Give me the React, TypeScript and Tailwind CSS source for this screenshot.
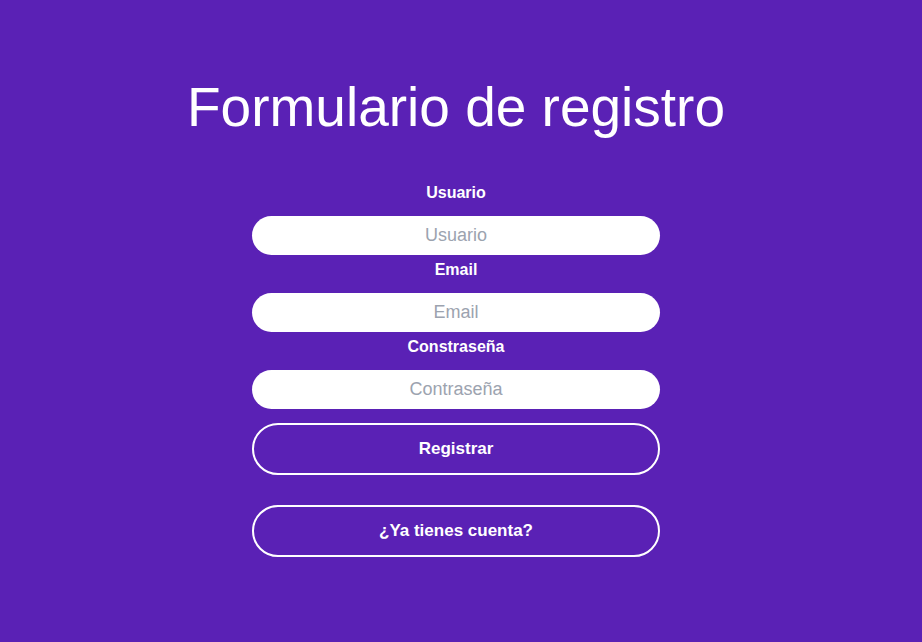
import React from "react";

const font = { fontFamily: '"Liberation Sans", Arial, sans-serif' };

function Field({ label, placeholder, type = "text" }: { label: string; placeholder: string; type?: string }) {
  return (
    <div className="flex flex-col items-center w-full">
      <label className="mt-[5px] mb-[13px] h-[20px] leading-[20px] text-[16px] font-bold text-white">{label}</label>
      <input
        type={type}
        placeholder={placeholder}
        className="w-full h-[39px] rounded-full bg-white text-center text-[18px] text-gray-700 placeholder:text-[#9ca3af] outline-none border-0"
        style={font}
      />
    </div>
  );
}

export default function App() {
  return (
    <div className="min-h-[642px] w-full bg-[#5a21b5] flex flex-col items-center pr-[10px]" style={font}>
      <h1 className="mt-[72px] text-[55px] leading-[70px] text-white font-normal">Formulario de registro</h1>
      <div className="w-[408px] flex flex-col items-center mt-[36px]">
        <Field label="Usuario" placeholder="Usuario" />
        <Field label="Email" placeholder="Email" type="email" />
        <Field label="Constraseña" placeholder="Contraseña" type="password" />
        <button className="mt-[14px] w-full h-[52px] rounded-full border-2 border-white text-white text-[17px] font-bold" style={font}>
          Registrar
        </button>
        <button className="mt-[30px] w-full h-[52px] rounded-full border-2 border-white text-white text-[17px] font-bold" style={font}>
          ¿Ya tienes cuenta?
        </button>
      </div>
    </div>
  );
}
